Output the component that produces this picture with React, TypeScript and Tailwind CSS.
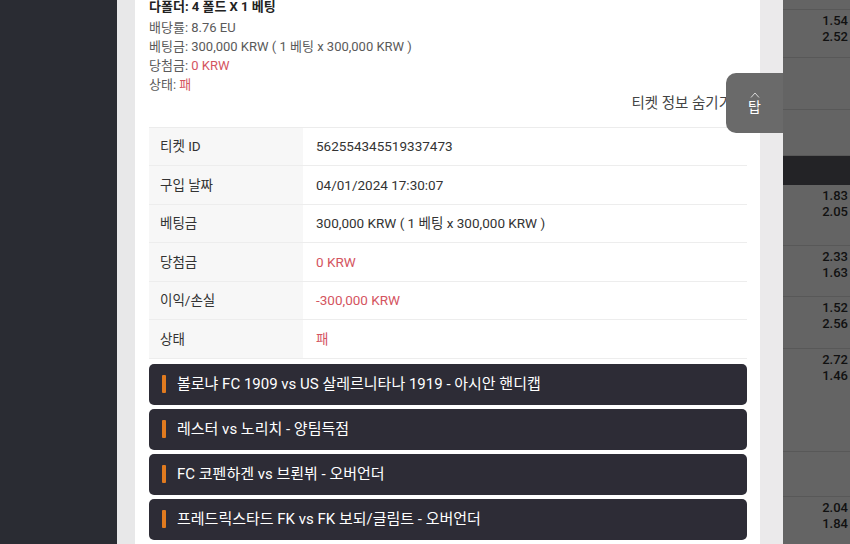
import React from "react";

const font = { fontFamily: "Roboto, 'Noto Sans CJK KR', 'Noto Sans', sans-serif" };

const detailRows: { label: string; value: string; red?: boolean }[] = [
  { label: "티켓 ID", value: "562554345519337473" },
  { label: "구입 날짜", value: "04/01/2024 17:30:07" },
  { label: "베팅금", value: "300,000 KRW ( 1 베팅 x 300,000 KRW )" },
  { label: "당첨금", value: "0 KRW", red: true },
  { label: "이익/손실", value: "-300,000 KRW", red: true },
  { label: "상태", value: "패", red: true },
];

const matches = [
  "볼로냐 FC 1909 vs US 살레르니타나 1919 - 아시안 핸디캡",
  "레스터 vs 노리치 - 양팀득점",
  "FC 코펜하겐 vs 브뢴뷔 - 오버언더",
  "프레드릭스타드 FK vs FK 보되/글림트 - 오버언더",
];

// odds column behind the modal
const oddsRows: { h: string; odds?: [string, string]; band?: boolean }[] = [
  { h: "h-[10px]" },
  { h: "h-[48px]", odds: ["1.54", "2.52"] },
  { h: "h-[52px]" },
  { h: "h-[46px]" },
  { h: "h-[29px]", band: true },
  { h: "h-[61px]", odds: ["1.83", "2.05"] },
  { h: "h-[51px]", odds: ["2.33", "1.63"] },
  { h: "h-[52px]", odds: ["1.52", "2.56"] },
  { h: "h-[103px]", odds: ["2.72", "1.46"] },
  { h: "h-[45px]" },
  { h: "h-[60px]", odds: ["2.04", "1.84"] },
];

export default function App() {
  return (
    <div className="relative w-[850px] h-[544px] overflow-hidden flex" style={font}>
      <div className="w-[117px] h-full bg-[#2a2c33]" />
      <div className="w-[18px] h-full bg-[#e8e8e9]" />

      {/* ticket detail card */}
      <div className="w-[625px] h-full bg-white pl-[14px] pr-[13px]">
        <div className="-mt-[3px] text-[13px] leading-[19px] text-[#5a5a5a]">
          <div className="font-bold text-[#222] mb-[2px]">다폴더: 4 폴드 X 1 베팅</div>
          <div>배당률: 8.76 EU</div>
          <div>베팅금: 300,000 KRW ( 1 베팅 x 300,000 KRW )</div>
          <div>
            당첨금: <span className="text-[#d4555f]">0 KRW</span>
          </div>
          <div>
            상태: <span className="text-[#d4555f]">패</span>
          </div>
          <div className="text-right text-[14.5px] leading-[19px] text-[#444] pr-[15px]">티켓 정보 숨기기</div>
        </div>

        <div className="mt-[13.5px] border-t border-[#ececec]">
          {detailRows.map((r) => (
            <div key={r.label} className="flex h-[38.5px] border-b border-[#ededed] text-[13.5px]">
              <div className="w-[154px] bg-[#f7f7f7] flex items-center pl-[11px] text-[#333]">{r.label}</div>
              <div className={`flex-1 flex items-center pl-[13px] ${r.red ? "text-[#d4555f]" : "text-[#333]"}`}>
                {r.value}
              </div>
            </div>
          ))}
        </div>

        <div className="mt-[5px] flex flex-col gap-[4px]">
          {matches.map((m) => (
            <div key={m} className="h-[41px] rounded-[5px] bg-[#2d2c36] flex items-center pl-[13px]">
              <div className="w-[4px] h-[18px] rounded-[1px] bg-[#e07a1f]" />
              <div className="ml-[11px] text-white text-[15px]">{m}</div>
            </div>
          ))}
        </div>
      </div>

      <div className="w-[23px] h-full bg-[#ebeaeb]" />

      {/* odds column */}
      <div className="flex-1 h-full bg-[#646464] flex flex-col">
        {oddsRows.map((r, i) => (
          <div
            key={i}
            className={`${r.h} shrink-0 ${r.band ? "bg-[#232326]" : "border-b border-[#585858]"} flex flex-col items-end pr-[2px] pt-[3px] text-[13px] leading-[16px] font-medium text-[#111]`}
          >
            {r.odds && (
              <>
                <span>{r.odds[0]}</span>
                <span>{r.odds[1]}</span>
              </>
            )}
          </div>
        ))}
      </div>

      {/* scroll-to-top tab */}
      <div className="absolute left-[726px] top-[73px] w-[57px] h-[60px] rounded-l-[10px] bg-[#6a6a6a] flex flex-col items-center justify-center text-white">
        <svg width="10" height="6" viewBox="0 0 10 6" className="mb-[1px]">
          <path d="M1 5.5 L5 1 L9 5.5" fill="none" stroke="#d8d8d8" strokeWidth="1" />
        </svg>
        <span className="text-[14px] leading-[16px]">탑</span>
      </div>
    </div>
  );
}
